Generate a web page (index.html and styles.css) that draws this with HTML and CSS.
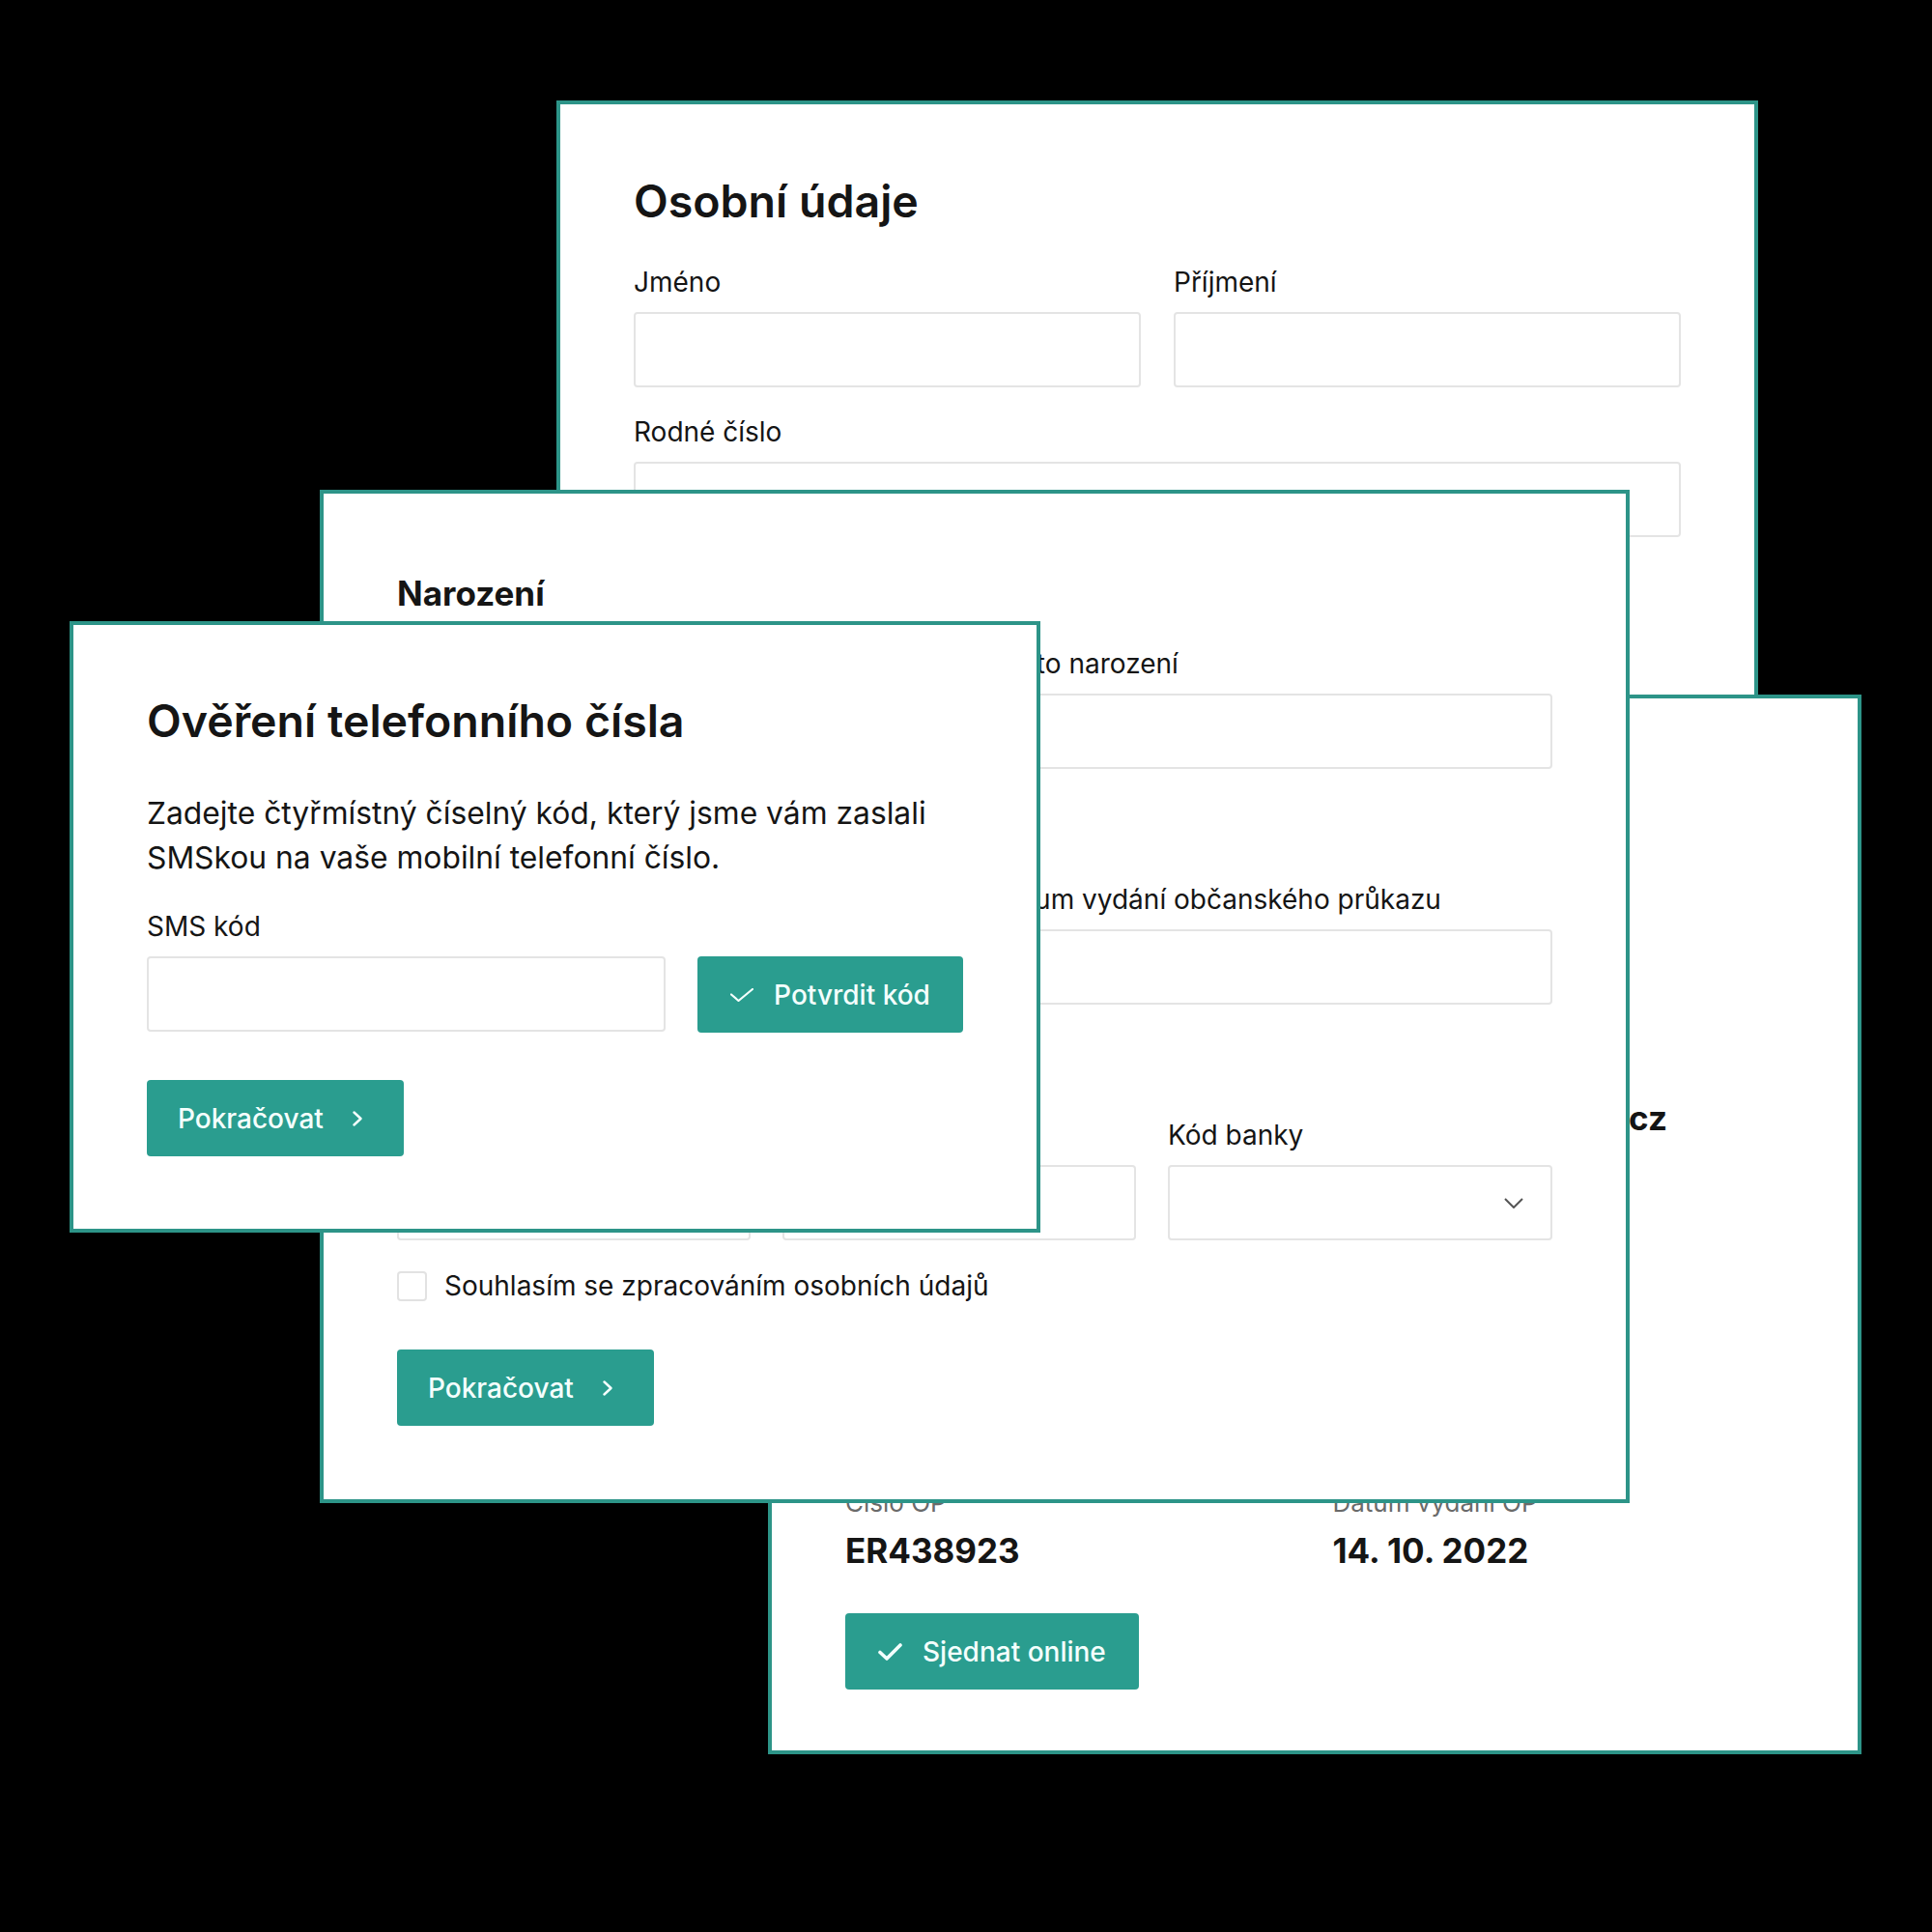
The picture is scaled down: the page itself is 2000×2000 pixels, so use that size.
FILE: index.html
```html
<!DOCTYPE html>
<html lang="cs">
<head>
  <meta charset="UTF-8" />
  <meta name="viewport" content="width=device-width, initial-scale=1.0"/>
  <title>Sjednání online</title>
  <link rel="stylesheet" href="styles.css">
</head>
<body>
  <div class="desk">

    <!-- krok 1: osobní údaje -->
    <section class="card card-personal">
      <h2 class="card-title">Osobní údaje</h2>
      <div class="grid-2">
        <div class="field">
          <label>Jméno</label>
          <div class="input"></div>
        </div>
        <div class="field">
          <label>Příjmení</label>
          <div class="input"></div>
        </div>
      </div>
      <div class="field field-gap">
        <label>Rodné číslo</label>
        <div class="input"></div>
      </div>
    </section>

    <!-- krok 4: shrnutí -->
    <section class="card card-summary">
      <div class="summary">
        <div class="item item-mail">
          <div class="item-label">E-mail</div>
          <div class="item-value">jan.novak@email.cz</div>
        </div>
        <div class="item">
          <div class="item-label">Číslo OP</div>
          <div class="item-value">ER438923</div>
        </div>
        <div class="item">
          <div class="item-label">Datum vydání OP</div>
          <div class="item-value">14. 10. 2022</div>
        </div>
      </div>
      <button class="btn btn-wide">
        <svg class="ico-check-bold" viewBox="0 0 25 18"><path d="M2 9.5 L9 16 L23 2"/></svg>
        Sjednat online
      </button>
    </section>

    <!-- krok 2: narození, doklad, účet -->
    <section class="card card-birth">
      <h3 class="section-title">Narození</h3>
      <div class="grid-2">
        <div class="field">
          <label>Datum narození</label>
          <div class="input"></div>
        </div>
        <div class="field">
          <label>Místo narození</label>
          <div class="input"></div>
        </div>
      </div>

      <div class="grid-2 block-gap">
        <div class="field">
          <label>Číslo OP</label>
          <div class="input"></div>
        </div>
        <div class="field">
          <label>Datum vydání občanského průkazu</label>
          <div class="input"></div>
        </div>
      </div>

      <div class="grid-3 block-gap">
        <div class="field">
          <label>Předčíslí</label>
          <div class="input"></div>
        </div>
        <div class="field">
          <label>Číslo účtu</label>
          <div class="input"></div>
        </div>
        <div class="field">
          <label>Kód banky</label>
          <div class="input select">
            <svg class="ico-down" viewBox="0 0 20 11"><path d="M1 1 L10 10 L19 1"/></svg>
          </div>
        </div>
      </div>

      <div class="consent">
        <span class="checkbox"></span>
        <span>Souhlasím se zpracováním osobních údajů</span>
      </div>

      <button class="btn btn-next">
        Pokračovat
        <svg class="ico-right" viewBox="0 0 10 16"><path d="M1.5 1.5 L8.5 8 L1.5 14.5"/></svg>
      </button>
    </section>

    <!-- krok 3: ověření SMS -->
    <section class="card card-sms">
      <h2 class="card-title">Ověření telefonního čísla</h2>
      <p class="lead">Zadejte čtyřmístný číselný kód, který jsme vám zaslali SMSkou na vaše mobilní telefonní číslo.</p>
      <div class="field">
        <label>SMS kód</label>
        <div class="code-row">
          <div class="input"></div>
          <button class="btn btn-confirm">
            <svg class="ico-check" viewBox="0 0 24 14"><path d="M1 6.5 L8.5 13 L23 1"/></svg>
            Potvrdit kód
          </button>
        </div>
      </div>
      <button class="btn btn-next btn-sms-next">
        Pokračovat
        <svg class="ico-right" viewBox="0 0 10 16"><path d="M1.5 1.5 L8.5 8 L1.5 14.5"/></svg>
      </button>
    </section>

  </div>
</body>
</html>
```

FILE: styles.css
```css
body {
  margin: 0;
  background: #000;
  font-family: Inter, "Noto Sans", sans-serif;
  color: #151515;
}

.desk {
  position: relative;
  width: 2000px;
  height: 2000px;
  overflow: hidden;
}

/* each step is a window lying on the desk */
.card {
  position: absolute;
  box-sizing: border-box;
  background: #fff;
  border: 4px solid #2d9488;
  padding: 73px 76px 0;
}

.card-personal {
  left: 576px;
  top: 104px;
  width: 1244px;
  height: 800px;
}

.card-summary {
  left: 795px;
  top: 719px;
  width: 1132px;
  height: 1097px;
}

.card-birth {
  left: 331px;
  top: 507px;
  width: 1356px;
  height: 1049px;
  padding-top: 82px;
}

.card-sms {
  left: 72px;
  top: 643px;
  width: 1005px;
  height: 633px;
  padding-top: 72px;
}

.card-title {
  margin: 0 0 36px;
  font-size: 46.5px;
  line-height: 55px;
  font-weight: 600;
}

.section-title {
  margin: 0 0 32px;
  font-size: 35px;
  line-height: 42px;
  font-weight: 700;
}

.block-gap {
  margin-top: 115px;
}

.field label {
  display: block;
  font-size: 28px;
  line-height: 40px;
  margin-bottom: 11px;
}

.field-gap {
  margin-top: 26px;
}

.input {
  box-sizing: border-box;
  height: 78px;
  border: 2px solid #e4e4e4;
  border-radius: 4px;
  background: #fff;
}

.grid-2 {
  display: grid;
  grid-template-columns: 1fr 1fr;
  column-gap: 34px;
}

.grid-3 {
  display: grid;
  grid-template-columns: 366px 366px 1fr;
  column-gap: 33px;
}

.select {
  display: flex;
  align-items: center;
  justify-content: flex-end;
  padding-right: 28px;
}

.ico-down {
  width: 20px;
  height: 11px;
  fill: none;
  stroke: #555;
  stroke-width: 2;
}

.consent {
  display: flex;
  align-items: center;
  gap: 18px;
  margin-top: 27px;
  font-size: 28px;
  line-height: 40px;
}

.checkbox {
  box-sizing: border-box;
  width: 31px;
  height: 31px;
  border: 2px solid #e2e2e2;
  border-radius: 4px;
}

.btn {
  display: inline-flex;
  align-items: center;
  box-sizing: border-box;
  height: 79px;
  padding: 0 33px;
  border: none;
  border-radius: 4px;
  background: #2a9d8f;
  color: #f4fffd;
  font-family: inherit;
  font-size: 28px;
  font-weight: 500;
}

.btn svg {
  fill: none;
  stroke: #f4fffd;
  stroke-linecap: round;
  stroke-linejoin: round;
}

.btn-next {
  margin-top: 46px;
  padding: 0 43px 0 32px;
  gap: 30px;
}

.btn-sms-next {
  margin-top: 49px;
}

.ico-right {
  width: 10px;
  height: 16px;
  stroke-width: 2.4;
}

.ico-check {
  width: 24px;
  height: 14px;
  stroke-width: 2.2;
}

.ico-check-bold {
  width: 25px;
  height: 18px;
  stroke-width: 3.6;
}

.btn-confirm,
.btn-wide {
  gap: 21px;
  padding: 0 34px;
}

.btn-confirm {
  width: 275px;
  justify-content: center;
}

.btn-wide {
  margin-top: 43px;
}

.lead {
  margin: 45px 0 28px;
  font-size: 31.8px;
  line-height: 46px;
}

.code-row {
  display: grid;
  grid-template-columns: 1fr 275px;
  column-gap: 33px;
}

/* summary grid */
.summary {
  display: grid;
  grid-template-columns: 1fr 1fr;
  column-gap: 37px;
  row-gap: 359px;
  margin-top: 294px;
}

.item-mail {
  grid-column: 2;
}

.item-label {
  font-size: 26px;
  line-height: 36px;
  color: #6a6a6a;
}

.item-value {
  margin-top: 9px;
  font-size: 35px;
  line-height: 44px;
  font-weight: 700;
}
```
